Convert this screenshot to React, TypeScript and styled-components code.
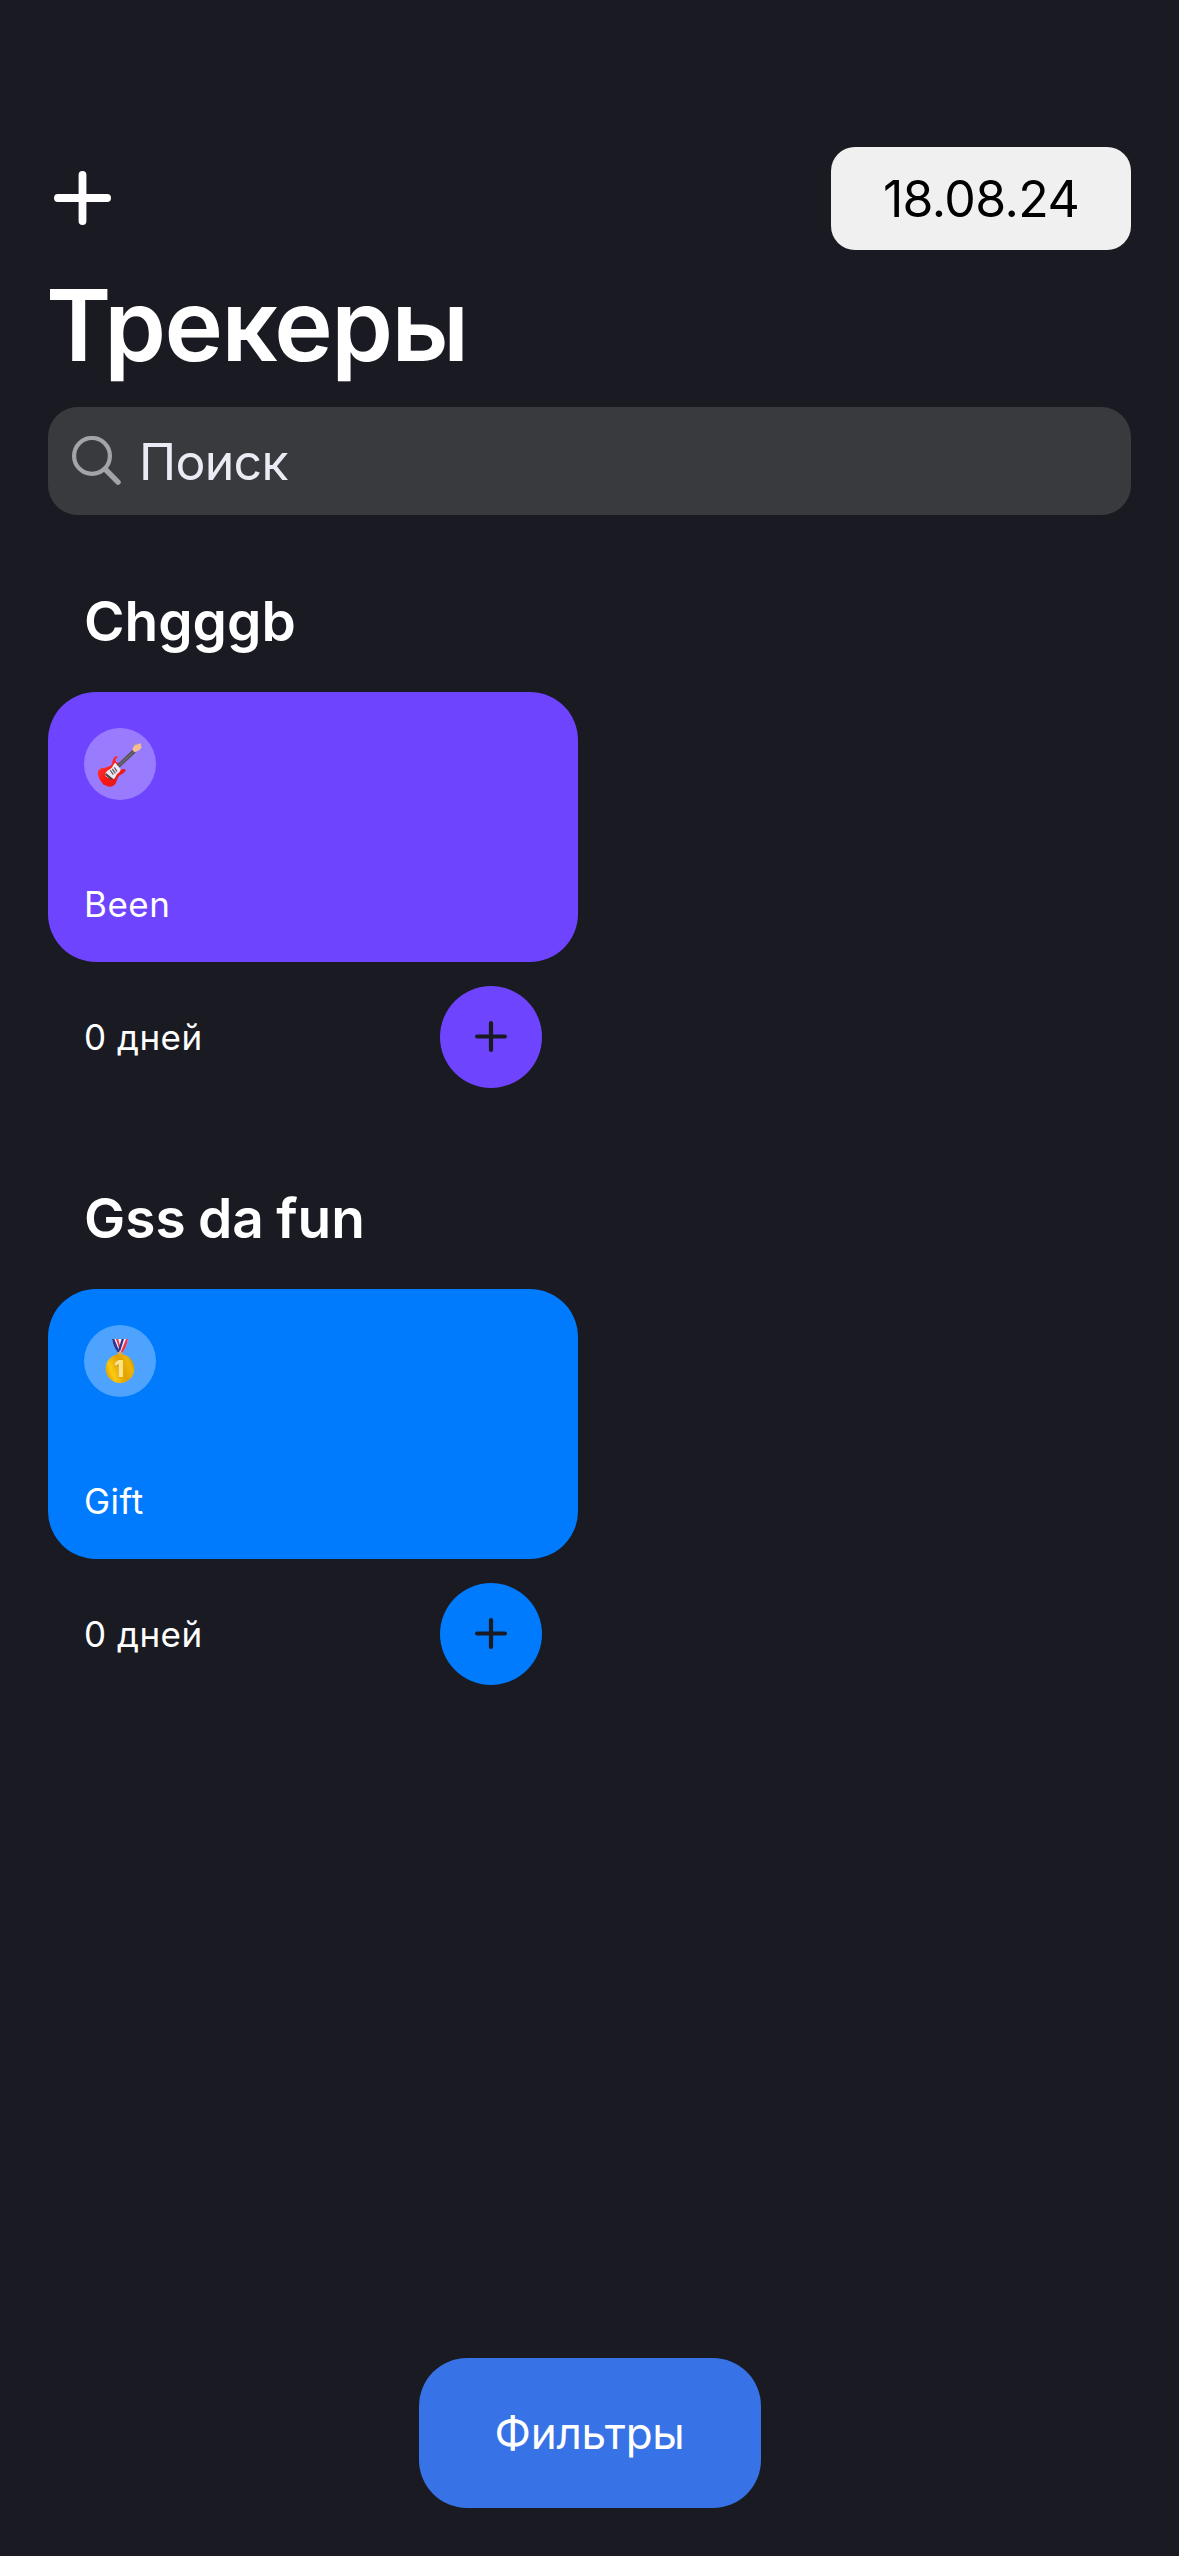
import React from "react";
import styled, { createGlobalStyle } from "styled-components";

const GlobalStyle = createGlobalStyle`
  *, *::before, *::after { box-sizing: border-box; }
  body { margin: 0; background: #1a1b22; }
  button { border: 0; padding: 0; margin: 0; font: inherit; background: none; }
  svg { display: block; }
`;

const Page = styled.div`
  display: flex;
  flex-direction: column;
  width: 1179px;
  height: 2556px;
  padding: 147px 48px 48px;
  background: #1a1b22;
  color: #ffffff;
  font-family: Inter, "Liberation Sans", sans-serif;
`;

const TopBar = styled.header`
  display: flex;
  justify-content: space-between;
  align-items: center;
  height: 103px;
`;

const AddButton = styled.button`
  padding: 0 0 1px 6px;
  color: #ffffff;
`;

const DatePill = styled.button`
  width: 300px;
  height: 103px;
  border-radius: 24px;
  background: #f0f0f0;
  color: #000000;
  font-size: 50px;
  letter-spacing: -0.6px;
`;

const Title = styled.h1`
  margin: 12px 0 19px -2px;
  font-size: 99px;
  line-height: 126px;
  font-weight: 600;
  letter-spacing: -1.5px;
`;

const SearchField = styled.div`
  display: flex;
  align-items: center;
  height: 108px;
  flex: none;
  padding-left: 24px;
  gap: 17px;
  border-radius: 30px;
  background: #393a3e;
  color: #ebebf5;
  font-size: 50px;
  letter-spacing: -0.7px;
`;

const Placeholder = styled.span`
  padding-top: 2px;
`;

const Sections = styled.main`
  display: flex;
  flex-direction: column;
  gap: 100px;
  margin-top: 76px;
`;

const Section = styled.section`
  width: 530px;
`;

const SectionTitle = styled.h2`
  margin: 0 0 41px;
  padding-left: 36px;
  font-size: 55px;
  line-height: 60px;
  font-weight: 600;
  word-spacing: -1.5px;
  white-space: nowrap;
`;

const Card = styled.article<{ $color: string }>`
  display: flex;
  flex-direction: column;
  justify-content: space-between;
  height: 270px;
  padding: 36px 36px 34px;
  border-radius: 48px;
  background: ${(p) => p.$color};
`;

const EmojiBadge = styled.div`
  width: 72px;
  height: 72px;
  border-radius: 50%;
  background: rgba(255, 255, 255, 0.3);
`;

const Label = styled.span`
  font-size: 35px;
  line-height: 48px;
  letter-spacing: 0.5px;
`;

const CardFooter = styled.div`
  display: flex;
  justify-content: space-between;
  align-items: center;
  margin-top: 24px;
  padding: 0 36px;
`;

const CompleteButton = styled.button<{ $color: string }>`
  display: flex;
  align-items: center;
  justify-content: center;
  width: 102px;
  height: 102px;
  padding-bottom: 1px;
  border-radius: 50%;
  background: ${(p) => p.$color};
  color: #1a1b22;
`;

const FiltersButton = styled.button`
  align-self: center;
  width: 342px;
  height: 150px;
  margin-top: auto;
  border-radius: 48px;
  background: #3772e7;
  color: #ffffff;
  font-size: 44px;
  letter-spacing: -0.3px;
`;

const PlusIcon = ({ width, height, stroke }: { width: number; height: number; stroke: number }) => (
  <svg width={width} height={height} viewBox={`0 0 ${width} ${height}`} fill="none" stroke="currentColor" strokeWidth={stroke} strokeLinecap="round">
    <path d={`M${stroke / 2} ${height / 2}H${width - stroke / 2}M${width / 2} ${stroke / 2}V${height - stroke / 2}`} />
  </svg>
);

const SearchIcon = () => (
  <svg width="50" height="50" viewBox="0 0 50 50" fill="none" stroke="#a3a3aa" strokeLinecap="round">
    <circle cx="20" cy="19.9" r="17.9" strokeWidth="4.2" />
    <path d="M34 34L46 46.2" strokeWidth="5.4" />
  </svg>
);

const GuitarIcon = () => (
  <svg width="72" height="72" viewBox="42 39 216 216">
    <defs>
      <linearGradient id="guitarBody" x1="0" y1="0" x2="1" y2="1">
        <stop offset="0" stopColor="#ff4a43" />
        <stop offset="0.5" stopColor="#fb1714" />
        <stop offset="1" stopColor="#d51c20" />
      </linearGradient>
    </defs>
    <path d="M98 202l5 6M118 204l4 5" stroke="#66577e" strokeWidth="5" />
    <path d="M140 124C133 124 128 133 127 143C125 153 115 156 99 159C87 161 81 168 84 179C87 193 96 207 110 213C122 218 133 213 138 203C142 195 143 184 151 180C159 176 166 171 167 164C164 160 158 163 152 164C145 164 142 157 145 150C147 142 135 142 136 134C137 129 145 128 144 125Z" fill="url(#guitarBody)" />
    <path d="M136 143C129 147 129 156 121 162C113 166 106 171 105 179C107 190 125 188 132 192C138 188 137 180 144 175C150 171 153 166 151 161Z" fill="#eeeaf0" />
    <path d="M108 174l21 17-5 4-19-15z" fill="#4d454c" />
    <path d="M121 166l9 13M127 162l9 13M133 157l8 13" stroke="#67626c" strokeWidth="4" />
    <path d="M145 153L193 108" stroke="#555057" strokeWidth="12" />
    <path d="M147 151L192 109" stroke="#8b8590" strokeWidth="2" />
    <path d="M152 142l8 9M161 134l8 9M170 126l8 9M179 118l8 9" stroke="#77717b" strokeWidth="2" />
    <path d="M187 105C190 99 189 91 198 89L211 85L214 89L211 93L216 96L209 104C203 110 198 108 194 112Z" fill="#f6bd91" />
    <path d="M192 91l3-4M200 88l2-3" stroke="#a7a083" strokeWidth="4" />
  </svg>
);

const MedalIcon = () => (
  <svg width="72" height="72" viewBox="42 39 216 216">
    <defs>
      <linearGradient id="medalGold" x1="0" y1="0.7" x2="1" y2="0.3">
        <stop offset="0" stopColor="#e3a200" />
        <stop offset="0.22" stopColor="#fbcb12" />
        <stop offset="0.55" stopColor="#e5a100" />
        <stop offset="0.85" stopColor="#efb60c" />
        <stop offset="1" stopColor="#d29408" />
      </linearGradient>
    </defs>
    <path d="M126 81H174C171 97 164 113 156 123H145C135 114 129 98 126 81Z" fill="#f5f0fa" />
    <path d="M126 81H133L149 121L144 122C134 112 129 97 126 81Z" fill="#2b3490" />
    <path d="M138 81H145L151 105L148 112Z" fill="#f13b4d" />
    <path d="M155 81H162L150 119L145 112Z" fill="#2b3490" />
    <path d="M168 81H174C171 99 164 114 156 123H151Z" fill="#f33245" />
    <ellipse cx="150" cy="125" rx="9" ry="4" fill="#d8ad54" />
    <circle cx="150" cy="170" r="43" fill="url(#medalGold)" />
    <circle cx="150" cy="170" r="39" fill="none" stroke="#d49a00" strokeOpacity="0.45" strokeWidth="2" />
    <text x="147" y="194" textAnchor="middle" fontFamily="Inter, sans-serif" fontSize="68" fontWeight="900" fill="#fbe486" stroke="#bd8600" strokeWidth="2" paintOrder="stroke">1</text>
  </svg>
);

const trackers = [
  { category: "Chgggb", name: "Been", color: "#6e44fe", icon: <GuitarIcon /> },
  { category: "Gss da fun", name: "Gift", color: "#007bfe", icon: <MedalIcon /> },
];

export default function App() {
  return (
    <>
      <GlobalStyle />
      <Page>
        <TopBar>
          <AddButton aria-label="Добавить">
            <PlusIcon width={57} height={54} stroke={7.8} />
          </AddButton>
          <DatePill>18.08.24</DatePill>
        </TopBar>
        <Title>Трекеры</Title>
        <SearchField>
          <SearchIcon />
          <Placeholder>Поиск</Placeholder>
        </SearchField>
        <Sections>
          {trackers.map((t) => (
            <Section key={t.category}>
              <SectionTitle>{t.category}</SectionTitle>
              <Card $color={t.color}>
                <EmojiBadge>{t.icon}</EmojiBadge>
                <Label>{t.name}</Label>
              </Card>
              <CardFooter>
                <Label>0 дней</Label>
                <CompleteButton $color={t.color} aria-label="Отметить">
                  <PlusIcon width={32} height={31} stroke={4.2} />
                </CompleteButton>
              </CardFooter>
            </Section>
          ))}
        </Sections>
        <FiltersButton>Фильтры</FiltersButton>
      </Page>
    </>
  );
}
